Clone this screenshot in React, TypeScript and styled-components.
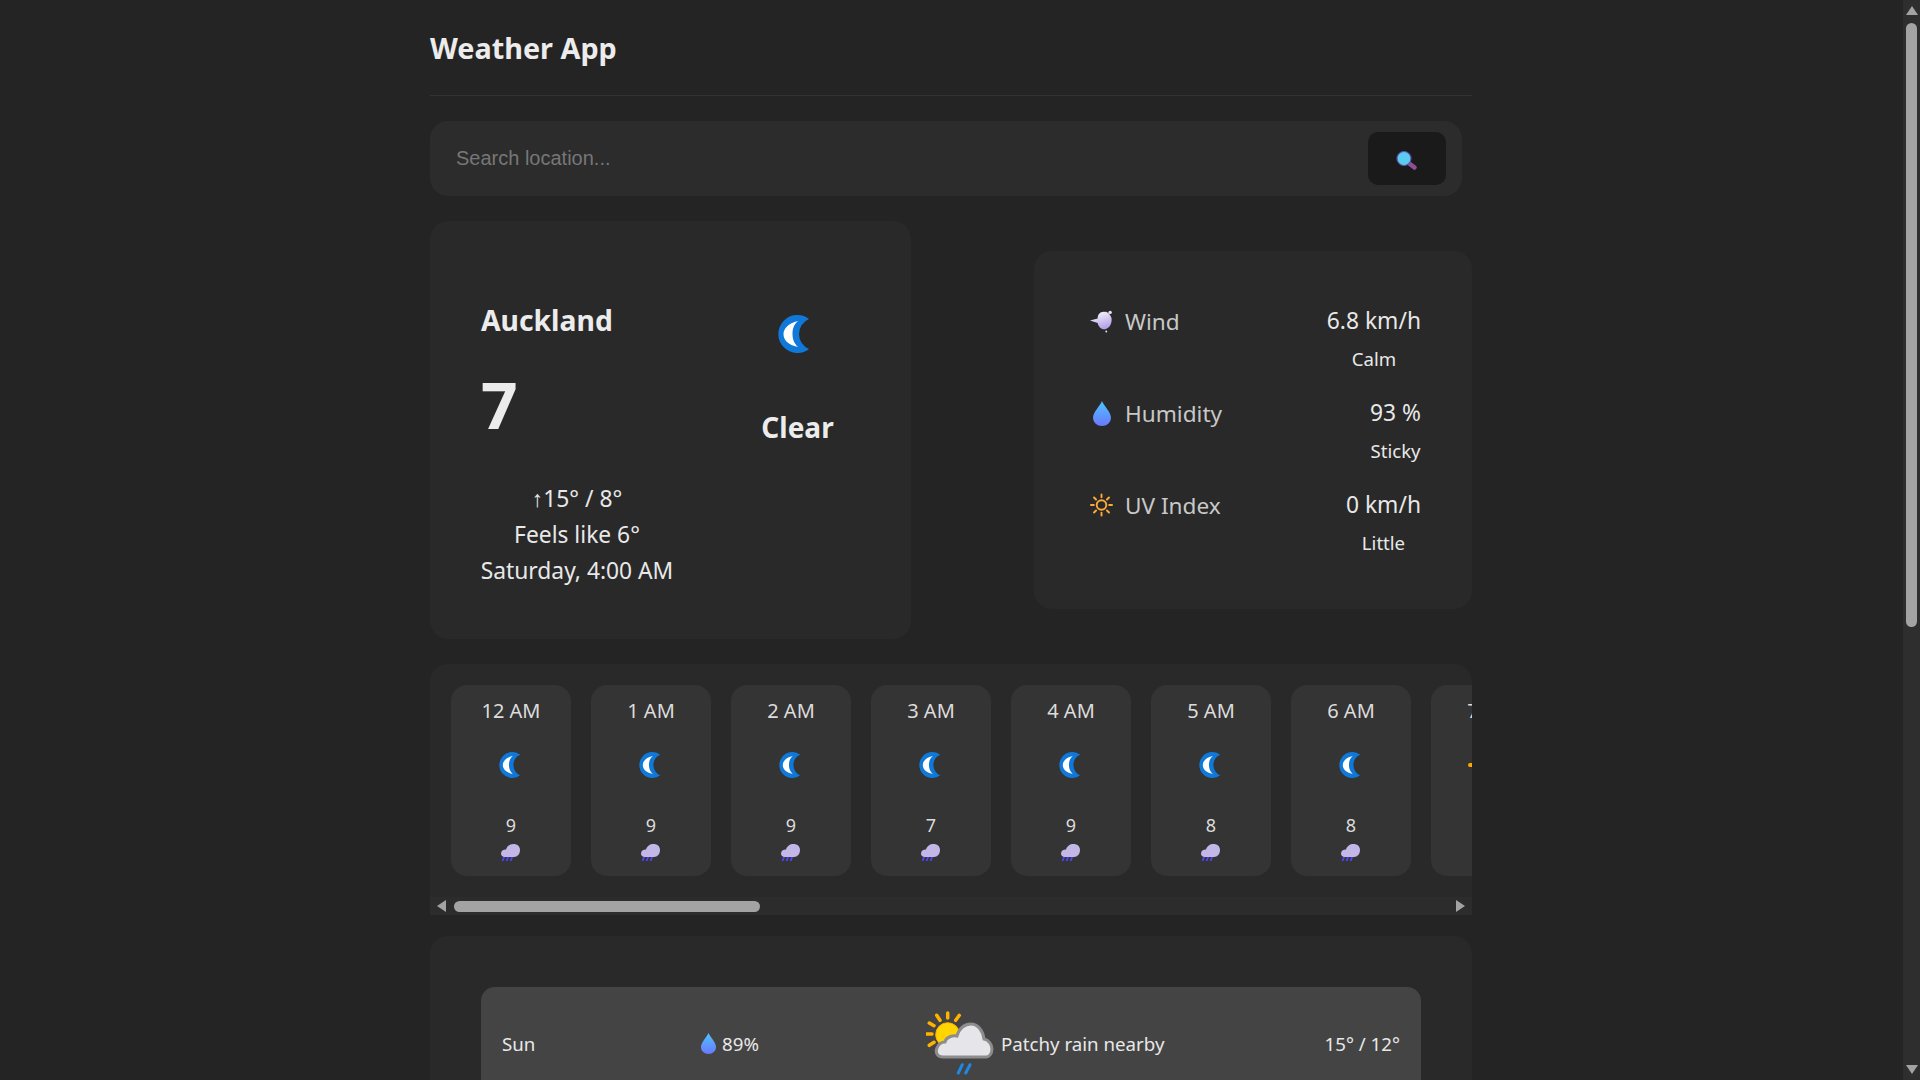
import styled, { createGlobalStyle } from "styled-components";

const GlobalStyle = createGlobalStyle`
  * {
    box-sizing: border-box;
  }

  html {
    background: #242424;
  }

  body {
    margin: 0;
    background: #242424;
    color: #e8e8e8;
    font-family: "Noto Sans", "Open Sans", sans-serif;
  }
`;

const Shell = styled.div`
  padding-right: 18px;
`;

const Page = styled.div`
  width: 1042px;
  margin: 0 auto;
  padding-bottom: 1px;
`;

const Header = styled.header`
  height: 96px;
  display: flex;
  align-items: center;
  border-bottom: 1px solid #333;
  margin-bottom: 25px;
`;

const Title = styled.h1`
  margin: 0;
  font-size: 28.8px;
  font-weight: 700;
  color: #ececec;
`;

const SearchBar = styled.form`
  width: 1032px;
  height: 75px;
  display: flex;
  align-items: center;
  justify-content: space-between;
  padding: 0 16px 0 26px;
  background: #2c2c2c;
  border-radius: 18px;
  margin-bottom: 25px;
`;

const SearchInput = styled.input`
  flex: 1;
  padding: 0;
  background: none;
  border: none;
  outline: none;
  font-family: "Liberation Sans", Arial, sans-serif;
  font-size: 20px;
  color: #eee;

  &::placeholder {
    color: #777;
    opacity: 1;
  }
`;

const SearchButton = styled.button`
  width: 78px;
  height: 53px;
  display: flex;
  align-items: center;
  justify-content: center;
  border: none;
  border-radius: 10px;
  background: #1a1a1a;
`;

const TopRow = styled.section`
  display: flex;
  justify-content: space-between;
  align-items: center;
  margin-bottom: 25px;
`;

const Card = styled.div`
  background: #292929;
  border-radius: 18px;
`;

const CurrentCard = styled(Card)`
  width: 481px;
  height: 418px;
  padding: 50px 51px;
  display: flex;
`;

const CurrentLeft = styled.div`
  width: 192px;
  display: flex;
  flex-direction: column;
`;

const City = styled.h2`
  margin: 28px 0 0;
  font-size: 28.3px;
  line-height: 42px;
  font-weight: 700;
  color: #ececec;
`;

const Temperature = styled.div`
  margin-top: 21px;
  font-size: 64px;
  line-height: 86px;
  font-weight: 700;
  color: #ececec;
`;

const DetailLines = styled.div`
  margin-top: 33px;
  width: 192px;
  text-align: center;
  font-size: 22.8px;
  line-height: 36px;
  white-space: nowrap;
  display: flex;
  flex-direction: column;
  align-items: center;
`;

const CurrentRight = styled.div`
  width: 150px;
  margin-left: 54px;
  display: flex;
  flex-direction: column;
  align-items: center;
  padding-top: 44px;
`;

const Condition = styled.div`
  margin-top: 53px;
  padding-left: 8px;
  font-size: 28px;
  line-height: 42px;
  font-weight: 700;
  color: #ececec;
`;

const StatsCard = styled(Card)`
  width: 438px;
  height: 358px;
  padding: 52px 51px 0 56px;
  display: flex;
  flex-direction: column;
  gap: 24px;
`;

const StatRow = styled.div`
  display: flex;
  justify-content: space-between;
  height: 68px;
`;

const StatLabel = styled.div`
  display: flex;
  align-items: center;
  gap: 12px;
  height: 36px;
  font-size: 22.6px;
  color: #c8c8c8;
`;

const IconSlot = styled.span`
  width: 23px;
  display: flex;
  justify-content: center;
`;

const StatValue = styled.div`
  display: flex;
  flex-direction: column;
  align-items: center;
  font-size: 22.8px;
  line-height: 36px;
  color: #e8e8e8;
`;

const StatNote = styled.span`
  font-size: 18.6px;
  line-height: 40px;
`;

const HourlyPanel = styled(Card)`
  margin-bottom: 21px;
  overflow: hidden;
  border-radius: 18px 18px 0 0;
`;

const HourStrip = styled.div`
  display: flex;
  gap: 20px;
  padding: 21px 0 21px 21px;
  overflow-x: auto;
`;

const HourCard = styled.div`
  flex: 0 0 120px;
  height: 191px;
  display: flex;
  flex-direction: column;
  align-items: center;
  background: #343434;
  border-radius: 16px;
  padding-top: 11px;
`;

const HourTime = styled.span`
  font-size: 20px;
  line-height: 30px;
  color: #dcdcdc;
`;

const HourIcon = styled.span`
  height: 26px;
  margin-top: 26px;
  display: flex;
  align-items: center;
  justify-content: center;
`;

const MoonNudge = styled.span`
  display: flex;
  margin-right: 3px;
`;

const HourTemp = styled.span`
  margin-top: 35px;
  font-size: 18px;
  line-height: 24px;
  color: #dcdcdc;
`;

const HourRain = styled.span`
  display: flex;
  margin-top: 7px;
  margin-right: 1px;
`;

const ScrollTrackX = styled.div`
  height: 18px;
  display: flex;
  align-items: center;
  padding: 0 7px;
  background: #2c2c2c;
`;

const ScrollThumbX = styled.div`
  width: 306px;
  height: 11px;
  margin-left: 8px;
  margin-right: auto;
  border-radius: 6px;
  background: #a3a3a3;
`;

const ScrollTrackY = styled.div`
  position: fixed;
  top: 0;
  right: 0;
  width: 17px;
  height: 100vh;
  display: flex;
  flex-direction: column;
  align-items: center;
  padding: 6px 0;
  background: #2e2e2e;
`;

const ScrollThumbY = styled.div`
  width: 11px;
  height: 604px;
  margin-top: 8px;
  margin-bottom: auto;
  border-radius: 6px;
  background: #a3a3a3;
`;

const Arrow = styled.span<{ $dir: "up" | "down" | "left" | "right" }>`
  width: 0;
  height: 0;
  flex: none;
  border-style: solid;
  border-color: transparent;
  border-width: 6.5px;
  ${({ $dir }) => $dir === "up" && "border-top-width: 0; border-bottom: 9px solid #a3a3a3;"}
  ${({ $dir }) => $dir === "down" && "border-bottom-width: 0; border-top: 9px solid #a3a3a3;"}
  ${({ $dir }) => $dir === "left" && "border-left-width: 0; border-right: 9px solid #a3a3a3;"}
  ${({ $dir }) => $dir === "right" && "border-right-width: 0; border-left: 9px solid #a3a3a3;"}
`;

const ForecastPanel = styled(Card)`
  padding: 51px;
  display: flex;
  flex-direction: column;
  gap: 6px;
`;

const ForecastRow = styled.div`
  height: 112px;
  display: grid;
  grid-template-columns: 198px 226px 1fr auto;
  align-items: center;
  padding: 0 21px;
  background: #444;
  border-radius: 14px;
  font-size: 18.7px;
  color: #e8e8e8;
`;

const Precip = styled.div`
  display: flex;
  align-items: center;
  gap: 5px;
`;

const Outlook = styled.div`
  display: flex;
  align-items: center;
  gap: 7px;
`;

const Moon = ({ width, height }: { width: number; height: number }) => (
  <svg width={width} height={height} viewBox="0 0 32 38">
    <defs>
      <filter id="moonSoft">
        <feGaussianBlur stdDeviation="0.7" />
      </filter>
    </defs>
    <path d="M31 4A19 19 0 1 0 31 34A16.25 16.25 0 0 1 31 4Z" fill="#0f78d8" />
    <path
      d="M20 6C10 8 5.500 14 5.500 19C5.500 25 10 30 20 32C15.500 28 14.500 23 14.500 19C14.500 14 15.500 10 20 6Z"
      fill="#fff"
      filter="url(#moonSoft)"
    />
  </svg>
);

const RainCloud = () => (
  <svg width="19" height="17" viewBox="0 0 19 17">
    <path d="M3.500 12l-2 5M7.500 12l-2 5M11.500 12l-2 5" stroke="#4a45e8" strokeWidth="2" fill="none" />
    <path
      d="M4 13C1.500 13 0 11.500 0 9.500C0 7 2 5.500 5 5.500C6 2 9 0 12.500 0C16 0 19 2 19 6C19 10 16.500 13 13 13Z"
      fill="#c3b7e8"
    />
  </svg>
);

const Drop = ({ width, height }: { width: number; height: number }) => (
  <svg width={width} height={height} viewBox="0 0 18 25">
    <defs>
      <linearGradient id="dropFill" x1="0" y1="0" x2="0" y2="1">
        <stop offset="0" stopColor="#4fc3ff" />
        <stop offset="1" stopColor="#6a78ff" />
      </linearGradient>
    </defs>
    <path d="M9 0C11 5 18 11 18 17A9 8 0 0 1 0 17C0 11 7 5 9 0Z" fill="url(#dropFill)" />
  </svg>
);

const WindIcon = () => (
  <svg width="24" height="24" viewBox="0 0 24 24">
    <defs>
      <linearGradient id="windFill" x1="0" y1="0" x2="0.400" y2="1">
        <stop offset="0" stopColor="#fff" />
        <stop offset="1" stopColor="#b6a4ea" />
      </linearGradient>
    </defs>
    <path
      d="M0 11.500L8 9.500C8 5 11 2 15 2.500C18 2 21 5 22.500 9C23 14 21 19 16 20.500C12 21.500 9 18 8 14Z"
      fill="url(#windFill)"
    />
    <circle cx="21" cy="3" r="1.800" fill="#e6e0f4" />
    <circle cx="17" cy="23" r="1" fill="#e6e0f4" />
  </svg>
);

const SunIcon = () => (
  <svg width="24" height="24" viewBox="0 0 24 24" stroke="#ffa83a" strokeWidth="2" fill="none" strokeLinecap="round">
    <circle cx="12" cy="12" r="5" />
    <path d="M12 1v3M12 20v3M1 12h3M20 12h3M4.200 4.200l2.100 2.100M17.700 17.700l2.100 2.100M4.200 19.800l2.100-2.100M17.700 6.300l2.100-2.100" />
  </svg>
);

// the hourly sun is wider than its moon neighbours, only its left ray shows at the panel edge
const HourSun = () => (
  <svg width="46" height="46" viewBox="0 0 46 46" stroke="#ffa800" strokeWidth="4" strokeLinecap="round">
    <circle cx="23" cy="23" r="11" fill="#ffc400" strokeWidth="2" />
    <path d="M2 23h4M40 23h4M23 2v4M23 40v4M8 8l3 3M35 35l3 3M8 38l3-3M35 11l3-3" />
  </svg>
);

const SearchIcon = () => (
  <svg width="24" height="24" viewBox="0 0 24 24">
    <path d="M13 15.500L19.500 20.500" stroke="#8f4f96" strokeWidth="4.500" strokeLinecap="round" />
    <circle cx="9" cy="11.500" r="7" fill="#5ccbf2" stroke="#5a55a8" strokeWidth="1.200" />
  </svg>
);

const PartlyCloudy = () => (
  <svg width="68" height="64" viewBox="0 0 68 64">
    <path
      d="M21.700 2v5M10.700 4.300l3.300 5M33.300 4.300l-3.600 5M3.300 12l4.700 2.700M0.700 23h5.300M3.300 34.300l4.700-3"
      stroke="#ffb300"
      strokeWidth="3.500"
      strokeLinecap="round"
    />
    <circle cx="21.700" cy="23.700" r="12" fill="#ffd400" stroke="#ffb300" strokeWidth="1" />
    <path
      d="M17 46C11 46 9 41 11 37C12.500 33 15 31 19 31C20 26 27 24 31 25C33 17 39 13 45 13C52 13 57 20 58 28C63 29 66 34 66 38C66 43 63 46 60 46Z"
      fill="#e6e6ea"
      stroke="#8d8d8d"
      strokeWidth="3"
    />
    <path d="M32.300 62l4-8.300M39.700 62l4.300-8.300" stroke="#1e88e5" strokeWidth="3" strokeLinecap="round" />
  </svg>
);

const hours = [
  "12 AM", "1 AM", "2 AM", "3 AM", "4 AM", "5 AM", "6 AM", "7 AM", "8 AM", "9 AM", "10 AM", "11 AM",
  "12 PM", "1 PM", "2 PM", "3 PM", "4 PM", "5 PM", "6 PM", "7 PM", "8 PM", "9 PM", "10 PM", "11 PM",
];
const hourTemps = [9, 9, 9, 7, 9, 8, 8, 8, 9, 10, 11, 12, 13, 14, 15, 15, 14, 13, 12, 11, 10, 10, 9, 9];

const days = [
  { day: "Sun", rain: "89%", text: "Patchy rain nearby", temps: "15° / 12°" },
  { day: "Mon", rain: "72%", text: "Patchy rain nearby", temps: "16° / 11°" },
  { day: "Tue", rain: "64%", text: "Patchy rain nearby", temps: "15° / 10°" },
  { day: "Wed", rain: "81%", text: "Patchy rain nearby", temps: "14° / 10°" },
  { day: "Thu", rain: "58%", text: "Patchy rain nearby", temps: "15° / 9°" },
  { day: "Fri", rain: "43%", text: "Patchy rain nearby", temps: "16° / 10°" },
  { day: "Sat", rain: "67%", text: "Patchy rain nearby", temps: "16° / 12°" },
];

export default function App() {
  return (
    <>
      <GlobalStyle />
      <Shell>
        <Page>
          <Header>
            <Title>Weather App</Title>
          </Header>

          <SearchBar>
            <SearchInput placeholder="Search location..." />
            <SearchButton type="button">
              <SearchIcon />
            </SearchButton>
          </SearchBar>

          <TopRow>
            <CurrentCard>
              <CurrentLeft>
                <City>Auckland</City>
                <Temperature>7</Temperature>
                <DetailLines>
                  <span>↑15° / 8°</span>
                  <span>Feels like 6°</span>
                  <span>Saturday, 4:00 AM</span>
                </DetailLines>
              </CurrentLeft>
              <CurrentRight>
                <Moon width={32} height={38} />
                <Condition>Clear</Condition>
              </CurrentRight>
            </CurrentCard>

            <StatsCard>
              <StatRow>
                <StatLabel>
                  <IconSlot>
                    <WindIcon />
                  </IconSlot>
                  Wind
                </StatLabel>
                <StatValue>
                  6.8 km/h
                  <StatNote>Calm</StatNote>
                </StatValue>
              </StatRow>
              <StatRow>
                <StatLabel>
                  <IconSlot>
                    <Drop width={18} height={25} />
                  </IconSlot>
                  Humidity
                </StatLabel>
                <StatValue>
                  93 %
                  <StatNote>Sticky</StatNote>
                </StatValue>
              </StatRow>
              <StatRow>
                <StatLabel>
                  <IconSlot>
                    <SunIcon />
                  </IconSlot>
                  UV Index
                </StatLabel>
                <StatValue>
                  0 km/h
                  <StatNote>Little</StatNote>
                </StatValue>
              </StatRow>
            </StatsCard>
          </TopRow>

          <HourlyPanel>
            <HourStrip>
              {hours.map((hour, i) => (
                <HourCard key={hour}>
                  <HourTime>{hour}</HourTime>
                  <HourIcon>
                    {i < 7 ? (
                      <MoonNudge>
                        <Moon width={22} height={26} />
                      </MoonNudge>
                    ) : (
                      <HourSun />
                    )}
                  </HourIcon>
                  <HourTemp>{hourTemps[i]}</HourTemp>
                  <HourRain>
                    <RainCloud />
                  </HourRain>
                </HourCard>
              ))}
            </HourStrip>
            <ScrollTrackX>
              <Arrow $dir="left" />
              <ScrollThumbX />
              <Arrow $dir="right" />
            </ScrollTrackX>
          </HourlyPanel>

          <ForecastPanel>
            {days.map((d) => (
              <ForecastRow key={d.day}>
                <span>{d.day}</span>
                <Precip>
                  <Drop width={17} height={21} />
                  {d.rain}
                </Precip>
                <Outlook>
                  <PartlyCloudy />
                  {d.text}
                </Outlook>
                <span>{d.temps}</span>
              </ForecastRow>
            ))}
          </ForecastPanel>
        </Page>
      </Shell>
      <ScrollTrackY>
        <Arrow $dir="up" />
        <ScrollThumbY />
        <Arrow $dir="down" />
      </ScrollTrackY>
    </>
  );
}
